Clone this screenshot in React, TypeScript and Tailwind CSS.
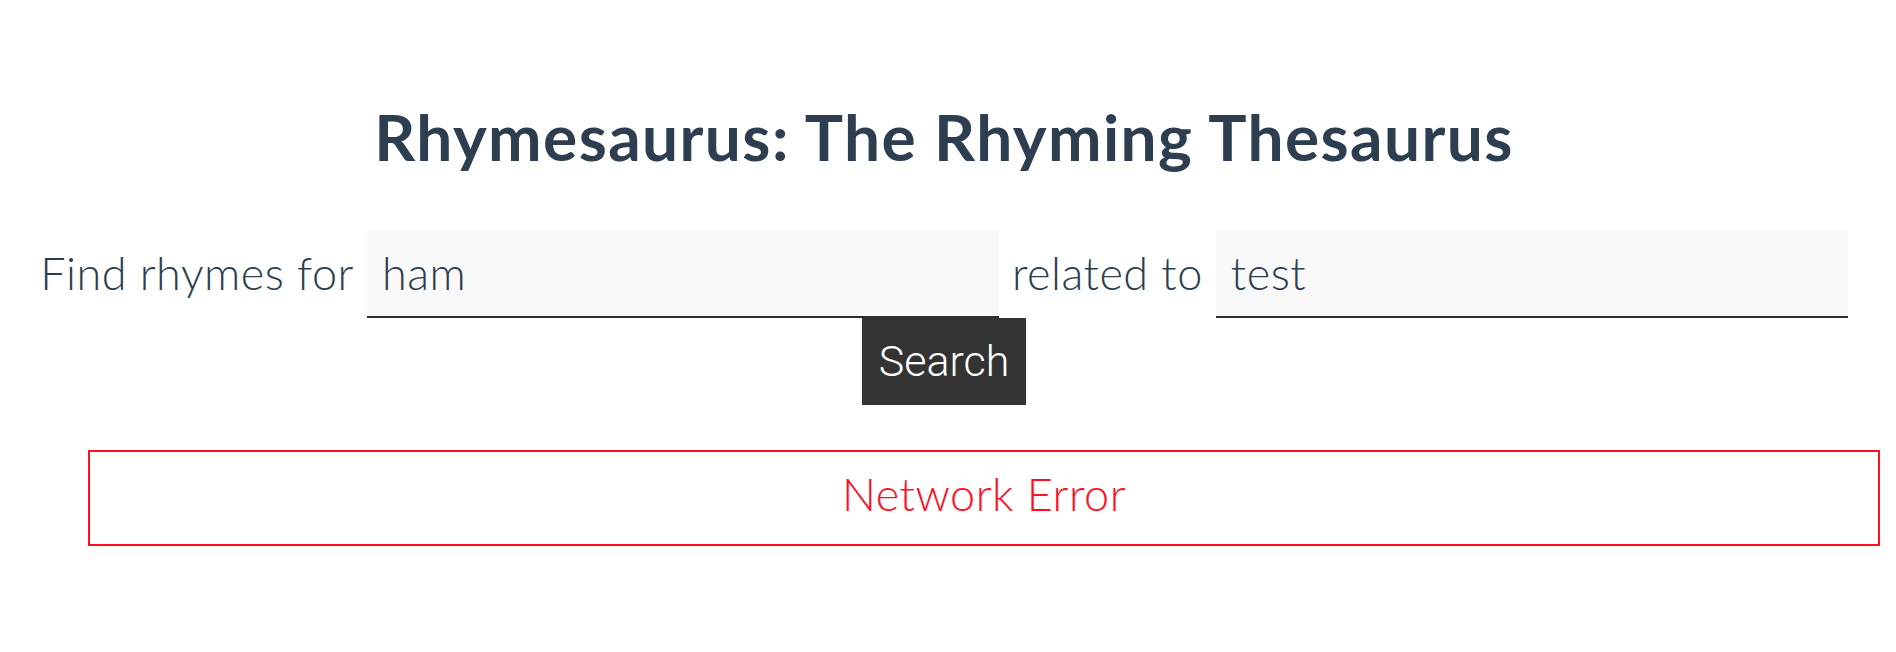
import React from "react";

export default function App() {
  const font = { fontFamily: "Lato, 'Noto Sans', sans-serif" };
  return (
    <div className="w-[1896px] h-[652px] bg-white overflow-hidden" style={font}>
      <div className="ml-[8px] w-[1872px] text-[#2c3e50]">
        <div className="pt-[92px]">
          <h1 className="h-[89px] leading-[89px] text-center text-[64px] tracking-[1.4px] font-bold text-[#2c3e50]">
            Rhymesaurus: The Rhyming Thesaurus
          </h1>
        </div>
        <form className="mt-[49px]" onSubmit={(e) => e.preventDefault()}>
          <div className="flex items-center justify-center gap-[13px] h-[88px] text-[45px] tracking-[0.5px]">
            <label className="font-light">Find rhymes for</label>
            <input
              defaultValue="ham"
              className="w-[632px] h-[88px] bg-[#f9f9f9] border-b-2 border-[#2d2d2d] px-[15px] text-[45px] tracking-[0.5px] font-light text-[#2c3e50] outline-none"
              style={font}
            />
            <label className="font-light">related to</label>
            <input
              defaultValue="test"
              className="w-[632px] h-[88px] bg-[#f9f9f9] border-b-2 border-[#2d2d2d] px-[15px] text-[45px] tracking-[0.5px] font-light text-[#2c3e50] outline-none"
              style={font}
            />
          </div>
          <div className="flex justify-center">
            <button
              type="submit"
              className="w-[164px] h-[87px] bg-[#333333] text-white text-[43px] font-light flex items-center justify-center"
              style={{ fontFamily: "Roboto, 'Liberation Sans', Arial, sans-serif" }}
            >
              Search
            </button>
          </div>
        </form>
        <div className="mt-[45px] ml-[80px] border-2 border-[#ff0f1f] pt-[16px] pb-[23px] text-center text-[45px] tracking-[0.5px] leading-[53px] text-[#ff0f1f] font-light">
          Network Error
        </div>
      </div>
    </div>
  );
}
